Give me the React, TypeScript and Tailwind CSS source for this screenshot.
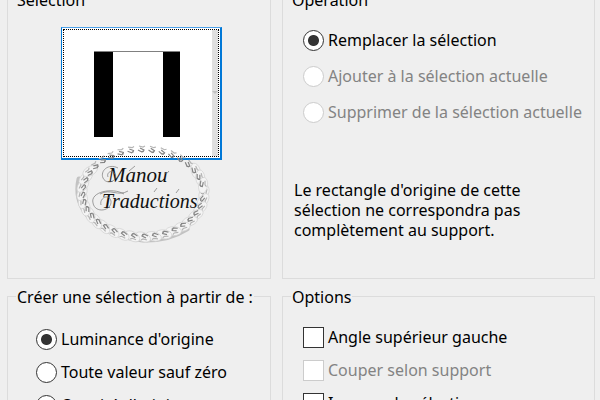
import React from 'react';

const links = Array.from({ length: 36 }, (_, i) => {
  const a = (i / 36) * Math.PI * 2;
  return { x: 71 + 61 * Math.cos(a), y: 52 + 44 * Math.sin(a), r: (Math.atan2(44 * Math.cos(a), -61 * Math.sin(a)) * 180) / Math.PI };
});

const Watermark: React.FC = () => (
  <svg viewBox="0 0 144 108" className="pointer-events-none absolute top-[114px] left-[11px] h-[108px] w-[144px]">
    <path d="M7 38Q2 61 19 78T71 99Q96 100 115 88" fill="none" stroke="#c2c2c2" strokeWidth="5" strokeLinecap="round" />
    {links.map((l, i) => (
      <g key={i} transform={`translate(${l.x} ${l.y}) rotate(${l.r})`}>
        {l.y > 24 && <ellipse rx="8" ry="4.5" transform="rotate(22)" fill="#f4f4f4" stroke="#d2d2d2" strokeWidth="0.7" />}
        <path d="M-5 1L-1 3L0 2M-3 -1L1 1L0 3" fill="none" stroke="#858585" strokeWidth="1.2" />
        <path d="M-4 -3L0 -2L2 -3" fill="none" stroke="#b4b4b4" strokeWidth="1.2" />
      </g>
    ))}
    <g fontFamily="'Liberation Serif', serif" fontStyle="italic" fill="#111">
      <text x="36" y="41" fontSize="21">Manou</text>
      <text x="30" y="67" fontSize="20">Traductions</text>
    </g>
    <g fill="none" stroke="#777" strokeWidth="0.7">
      <path d="M46 27C36 22 28 30 31 37C34 44 46 41 43 33C41 28 34 31 36 36" />
      <path d="M52 53C40 46 18 51 21 62C23 73 40 70 39 60C37 52 27 57 29 64M28 53C38 47 46 56 56 50" />
      <path d="M57 30L63 25M92 32Q96 33 97 30M82 51L85 47M104 52L107 48" />
    </g>
  </svg>
);

interface ChoiceProps {
  type: 'radio' | 'checkbox';
  name: string;
  label: string;
  defaultChecked?: boolean;
  disabled?: boolean;
}

const Choice: React.FC<ChoiceProps> = ({ type, name, label, defaultChecked, disabled }) => (
  <label className="flex h-6 items-center gap-1 whitespace-nowrap text-black has-disabled:text-[#838383]">
    <input
      type={type}
      name={name}
      defaultChecked={defaultChecked}
      disabled={disabled}
      className="size-[21px] shrink-0 appearance-none border border-[#333] bg-white disabled:border-[#ccc] [&[type=radio]]:rounded-full checked:bg-[radial-gradient(circle,#333_5px,white_6px)]"
    />
    {label}
  </label>
);

const App: React.FC = () => {
  return (
    <div className="h-screen overflow-hidden bg-[#efefef] font-['Noto_Sans',sans-serif] text-[16px] leading-5 text-black">
      <main className="-mt-3 grid grid-cols-[264fr_313fr] gap-x-[11px] gap-y-[6px] pr-[5px] pl-[7px]">
        <fieldset className="h-[291px] min-w-0 border border-[#dcdcdc]">
          <legend className="ml-2 px-[1px] pt-0.5">Sélection</legend>
          <div className="relative mt-[17px] ml-[53px] w-[161px]">
            <button
              type="button"
              aria-label="Sélection"
              className="flex h-[133px] w-full border-t border-r-2 border-b-2 border-l border-[#0078d7] border-t-[#4ba0e8] bg-white p-px"
            >
              <span className="flex h-full w-full border border-dotted border-black">
                <svg viewBox="0 0 148 126" className="h-[126px] w-[148px]">
                  <path d="M30 21h19v86H30zM99 21h17v86h-17z" />
                  <path d="M30 21.500h86" stroke="#808080" />
                </svg>
                <span className="flex flex-1 items-center justify-center bg-[#e0e0e0]">
                  <svg viewBox="0 0 6 4" className="h-1 w-1.5">
                    <path d="M0 0h6L3 3z" fill="#c2c2c2" />
                  </svg>
                </span>
              </span>
            </button>
            <Watermark />
          </div>
        </fieldset>

        <fieldset className="h-[291px] min-w-0 border border-[#dcdcdc]">
          <legend className="ml-2 px-[1px] pt-0.5">Opération</legend>
          <div className="flex flex-col gap-3 pt-[18px] pl-5">
            <Choice type="radio" name="operation" label="Remplacer la sélection" defaultChecked />
            <Choice type="radio" name="operation" label="Ajouter à la sélection actuelle" disabled />
            <Choice type="radio" name="operation" label="Supprimer de la sélection actuelle" disabled />
          </div>
          <p className="mt-14 ml-[11px] max-w-[250px]">
            Le rectangle d'origine de cette sélection ne correspondra pas complètement au support.
          </p>
        </fieldset>

        <fieldset className="min-w-0 border border-[#dcdcdc]">
          <legend className="ml-2 px-[1px] pt-0.5">Créer une sélection à partir de :</legend>
          <div className="flex flex-col gap-[9px] pt-5 pb-6 pl-7">
            <Choice type="radio" name="source" label="Luminance d'origine" defaultChecked />
            <Choice type="radio" name="source" label="Toute valeur sauf zéro" />
            <Choice type="radio" name="source" label="Opacité d'origine" />
          </div>
        </fieldset>

        <fieldset className="min-w-0 border border-[#dcdcdc]">
          <legend className="ml-2 px-[1px] pt-0.5">Options</legend>
          <div className="flex flex-col gap-[9px] pt-[18px] pb-6 pl-5">
            <Choice type="checkbox" name="corner" label="Angle supérieur gauche" />
            <Choice type="checkbox" name="crop" label="Couper selon support" disabled />
            <Choice type="checkbox" name="invert" label="Inverser la sélection" />
          </div>
        </fieldset>
      </main>
    </div>
  );
};

export default App;
